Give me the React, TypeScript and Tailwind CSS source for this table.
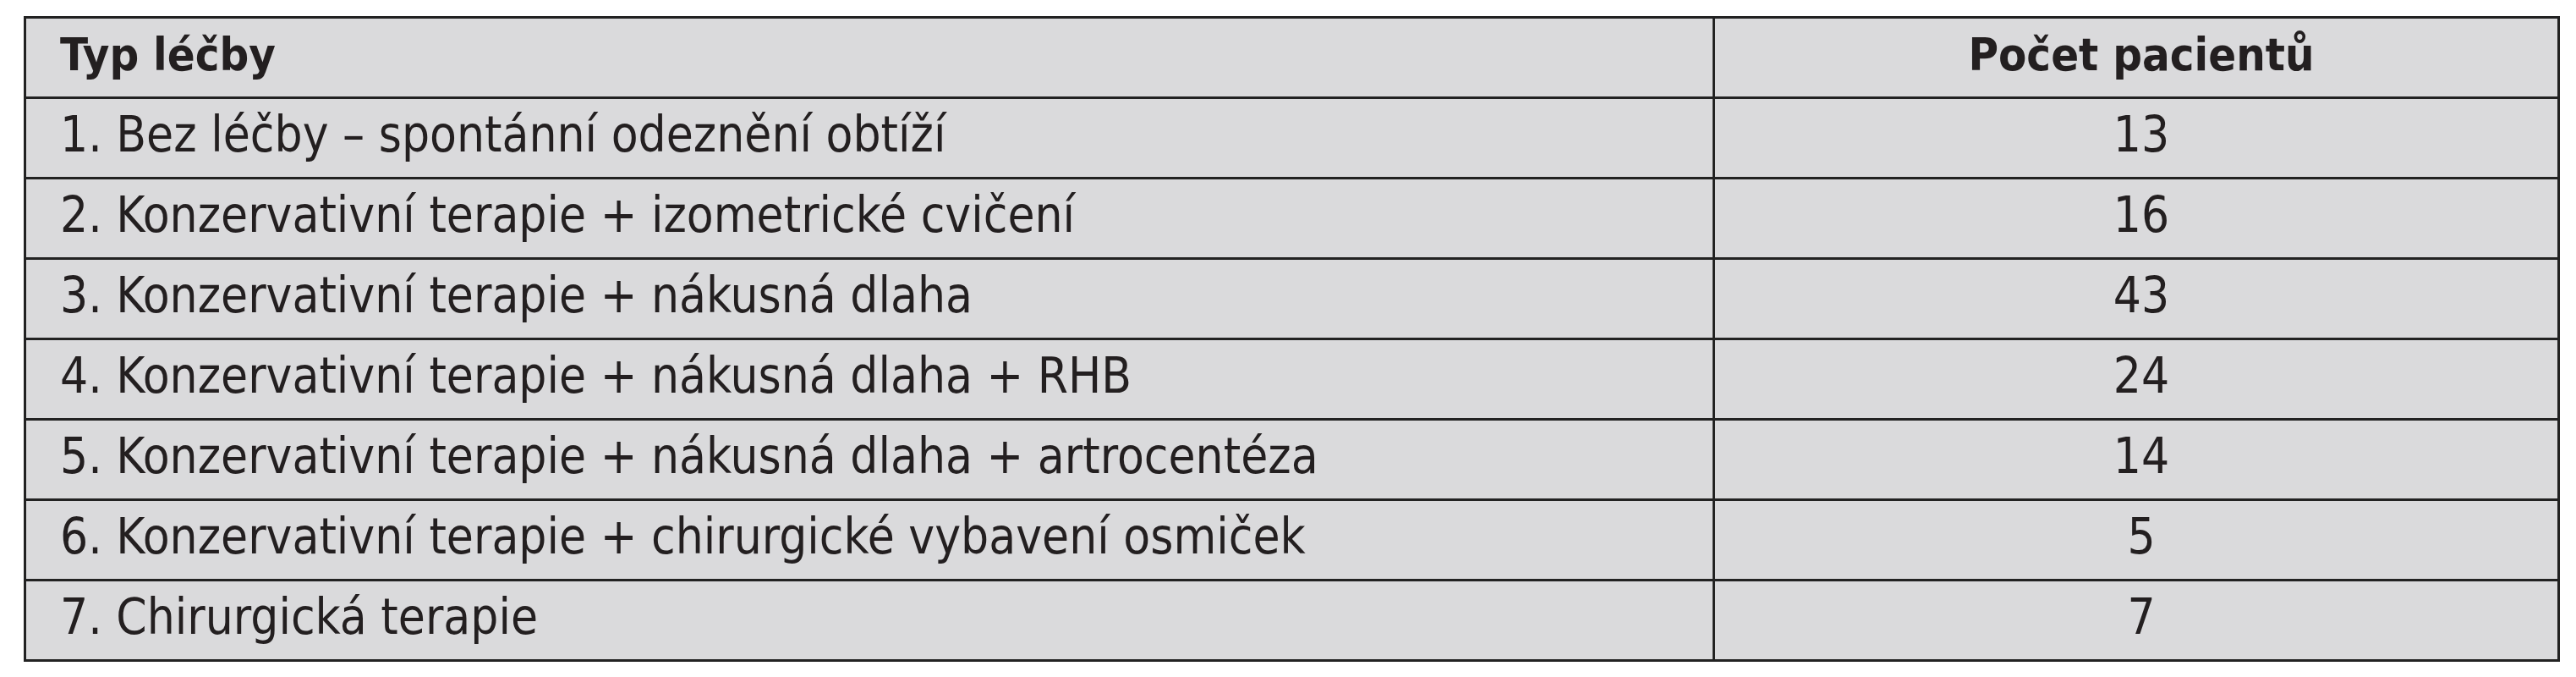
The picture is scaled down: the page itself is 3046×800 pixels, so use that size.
import React from "react";

const rows: [string, string][] = [
  ["1. Bez léčby – spontánní odeznění obtíží", "13"],
  ["2. Konzervativní terapie + izometrické cvičení", "16"],
  ["3. Konzervativní terapie + nákusná dlaha", "43"],
  ["4. Konzervativní terapie + nákusná dlaha + RHB", "24"],
  ["5. Konzervativní terapie + nákusná dlaha + artrocentéza", "14"],
  ["6. Konzervativní terapie + chirurgické vybavení osmiček", "5"],
  ["7. Chirurgická terapie", "7"],
];

export default function App() {
  return (
    <div
      className="w-[3046px] h-[800px] bg-white pt-[19px] pl-[28px] text-[#231f20]"
      style={{ fontFamily: '"DejaVu Sans Condensed", "Liberation Sans Narrow", "DejaVu Sans", sans-serif' }}
    >
      <div className="w-[2999px] border-[3px] border-[#222222] bg-[#dadadc]">
        <div className="grid grid-cols-[1997px_1fr] h-[92px] text-[54px] font-bold leading-none">
          <div className="flex items-center pl-[40px] pb-[6px] border-r-[3px] border-[#222222]">Typ léčby</div>
          <div className="flex items-center justify-center pb-[6px] pl-[12px]">Počet pacientů</div>
        </div>
        {rows.map(([label, n]) => (
          <div key={label} className="grid grid-cols-[1997px_1fr] h-[95px] border-t-[3px] border-[#222222] text-[58px] leading-none">
            <div className="flex items-center pl-[40px] pb-[8px] border-r-[3px] border-[#222222]">{label}</div>
            <div className="flex items-center justify-center pb-[8px] pl-[12px]">{n}</div>
          </div>
        ))}
      </div>
    </div>
  );
}
